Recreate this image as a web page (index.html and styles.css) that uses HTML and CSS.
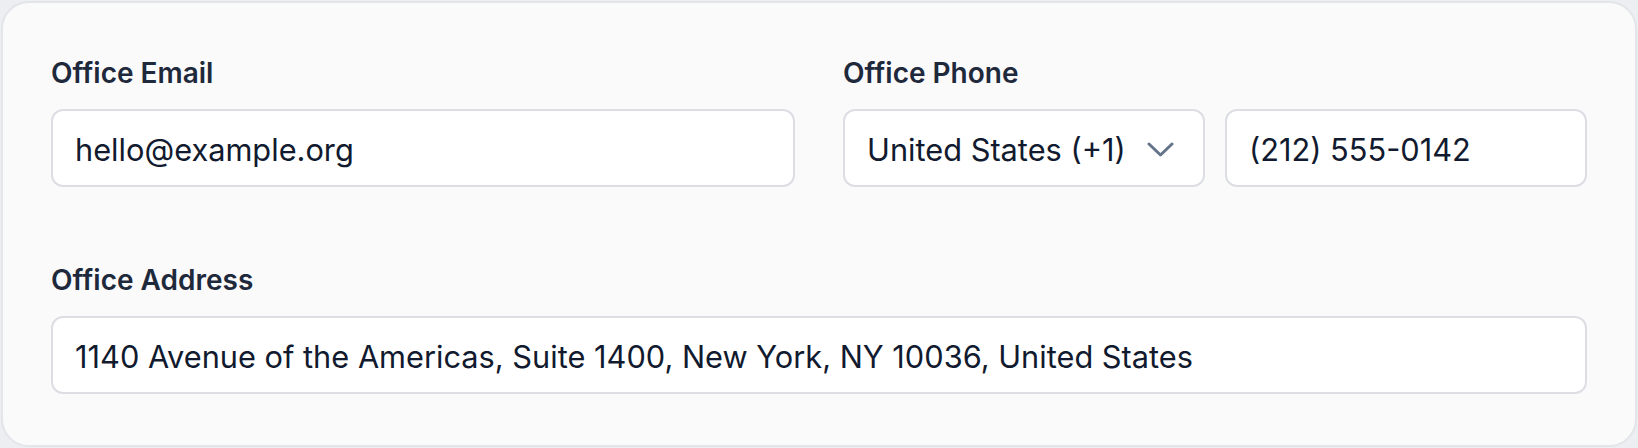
FILE: index.html
```html
<!DOCTYPE html>
<html lang="en">
<head>
<meta charset="utf-8">
<title>Office details</title>
<link rel="stylesheet" href="styles.css">
</head>
<body>
  <section class="card">
    <div class="grid">
      <div class="field">
        <label class="label" for="email">Office Email</label>
        <div class="control" id="email">hello@example.org</div>
      </div>
      <div class="field">
        <span class="label">Office Phone</span>
        <div class="phone">
          <div class="control select">
            <span class="select-text">United States (+1)</span>
            <svg class="chevron" width="27" height="15" viewBox="0 0 27 15" aria-hidden="true">
              <polyline points="2,2 13.5,13 25,2" fill="none" stroke="#64748b" stroke-width="3" stroke-linecap="round" stroke-linejoin="round"/>
            </svg>
          </div>
          <div class="control">(212) 555-0142</div>
        </div>
      </div>
      <div class="field wide">
        <label class="label" for="addr">Office Address</label>
        <div class="control" id="addr">1140 Avenue of the Americas, Suite 1400, New York, NY 10036, United States</div>
      </div>
    </div>
  </section>
</body>
</html>
```

FILE: styles.css
```css
* { box-sizing: border-box; }

html, body {
  margin: 0;
  padding: 0;
}

body {
  padding: 1px;
  background: #eceef1;
  font-family: Inter, "Noto Sans", sans-serif;
  color: #111827;
}

.card {
  height: 446px;
  background: #fafafb;
  border: 2px solid #e3e5e9;
  border-radius: 28px;
  padding: 49px 48px 48px;
}

.grid {
  display: grid;
  grid-template-columns: 1fr 1fr;
  column-gap: 48px;
  row-gap: 72px;
}

.field {
  display: flex;
  flex-direction: column;
  gap: 15px;
  min-width: 0;
}

.wide {
  grid-column: 1 / -1;
}

.label {
  font-size: 28px;
  line-height: 42px;
  font-weight: 600;
  color: #1e293b;
}

.control {
  height: 78px;
  background: #ffffff;
  border: 2px solid #dcdee3;
  border-radius: 12px;
  padding: 2px 22px 0;
  display: flex;
  align-items: center;
  font-size: 30.75px;
  color: #111a2e;
  white-space: nowrap;
  overflow: hidden;
  min-width: 0;
}

.phone {
  display: grid;
  grid-template-columns: 1fr 1fr;
  gap: 20px;
}

.select {
  position: relative;
  padding-right: 80px;
}

.select-text {
  overflow: hidden;
  white-space: nowrap;
  display: block;
}

.chevron {
  position: absolute;
  right: 29px;
  top: 50%;
  margin-top: -6px;
}
```
